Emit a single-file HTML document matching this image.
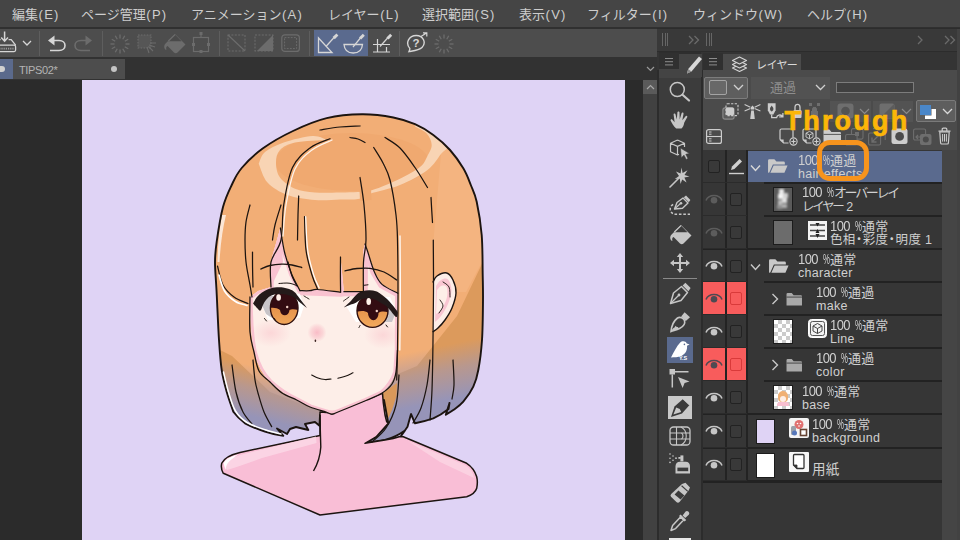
<!DOCTYPE html>
<html lang="ja">
<head>
<meta charset="utf-8">
<title>CLIP STUDIO PAINT - TIPS02</title>
<style>
html,body{margin:0;padding:0;}
body{width:960px;height:540px;overflow:hidden;background:#2b2b2b;position:relative;
 font-family:"Liberation Sans","Noto Sans CJK JP",sans-serif;color:#d6d6d6;}
.abs{position:absolute;}
#menubar{left:0;top:0;width:960px;height:26.5px;background:#454545;border-bottom:2px solid #303030;}
#menubar span{position:absolute;top:5px;font-size:13px;line-height:20px;color:#cecece;white-space:nowrap;}
#menubar i{font-style:normal;letter-spacing:1.3px;margin-left:0.5px;}
#toolbar{left:0;top:28.5px;width:657px;height:28.5px;background:#4d4d4d;}
#tabrow{left:0;top:57px;width:657px;height:22.5px;background:#323232;}
#tabsel{left:0;top:58.5px;width:13px;height:20.5px;background:#5b6a8c;}
#tab{left:13px;top:58.5px;width:112px;height:20.5px;background:#4d4d4d;}
#tab span{position:absolute;left:6px;top:3px;font-size:11px;line-height:16px;color:#b4b4b4;letter-spacing:-0.35px;}
#workspace{left:0;top:80px;width:643px;height:460px;background:#2b2b2b;}
#canvas{left:82px;top:80px;width:543px;height:460px;background:#dfd3f5;}
#vscroll{left:643.3px;top:79.5px;width:13.7px;height:461px;background:#414141;}
#rightdock{left:657px;top:28px;width:303px;height:512px;background:#2c2c2c;}
#dockstrip2{left:657px;top:52px;width:303px;height:18px;background:#343434;}
#dockright{left:956.5px;top:28.5px;width:3.5px;height:512px;background:#424242;}
#dockhead{left:657px;top:28.7px;width:303px;height:22.3px;background:#393939;}
#toolpanel{left:659px;top:75px;width:42px;height:465px;background:#3c3c3c;}
#tooltab{left:659px;top:52px;width:42px;height:23px;background:#2e2e2e;}
#layerpanel{left:703px;top:70px;width:253.5px;height:470px;background:#4b4b4b;}
#layerlist{left:703px;top:150px;width:239px;height:390px;background:#363636;}
#layerscroll{left:942px;top:150px;width:14.5px;height:390px;background:#454545;}
.row{position:absolute;left:703px;width:239px;height:33px;}
.row .sep{position:absolute;left:0;bottom:0;height:1px;width:239px;background:#1f1f1f;}
.t2{font-size:12.5px !important;}
.t1,.t2{position:absolute;white-space:nowrap;font-size:13px;line-height:14px;color:#d0d0d0;letter-spacing:0.3px;}

.eye{position:absolute;left:3px;width:17px;height:10px;}
.chk{position:absolute;left:27px;width:11px;height:11px;border:1px solid #232323;border-radius:2px;background:#353535;box-sizing:content-box;}
.vl{position:absolute;top:150px;width:1px;height:331px;background:#222;}
.thumb{position:absolute;width:17px;height:22px;border:1px solid #1e1e1e;background:#fff;}
.lat{letter-spacing:0.2px;}
.red{position:absolute;background:#f85c5c;height:32px;top:0;}

.n{letter-spacing:-0.6px;display:inline-block;transform:scaleY(1.13);transform-origin:50% 78%;}
.pc{display:inline-block;width:6.5px;margin-left:5.5px;transform:scale(.6,1.13);transform-origin:0 78%;}
.k{letter-spacing:-2.3px;}
.dot{display:inline-block;width:7.2px;text-indent:-2.9px;}
</style>
</head>
<body>
<div id="menubar" class="abs">
 <span style="left:12px">編集<i>(E)</i></span>
 <span style="left:81px">ページ管理<i>(P)</i></span>
 <span style="left:191px">アニメーション<i>(A)</i></span>
 <span style="left:328px">レイヤー<i>(L)</i></span>
 <span style="left:422px">選択範囲<i>(S)</i></span>
 <span style="left:519px">表示<i>(V)</i></span>
 <span style="left:587px">フィルター<i>(I)</i></span>
 <span style="left:693px">ウィンドウ<i>(W)</i></span>
 <span style="left:807px">ヘルプ<i>(H)</i></span>
</div>
<div id="toolbar" class="abs"></div>
<div id="tabrow" class="abs"></div>
<div id="tabsel" class="abs"></div>
<div id="tab" class="abs"><span>TIPS02*</span></div>
<div id="workspace" class="abs"></div>
<div id="canvas" class="abs"></div>
<!-- ILLU -->
<svg class="abs" id="illu" style="left:82px;top:80px" width="543" height="460" viewBox="82 80 543 460">
<defs>
<linearGradient id="violet" gradientUnits="userSpaceOnUse" x1="364" y1="362" x2="375" y2="415"><stop offset="0" stop-color="#a096b0" stop-opacity="0"/><stop offset="0.45" stop-color="#a096b0" stop-opacity="0.6"/><stop offset="1" stop-color="#9694b8" stop-opacity="1"/></linearGradient>
<linearGradient id="violetL" gradientUnits="userSpaceOnUse" x1="262" y1="368" x2="250" y2="416"><stop offset="0" stop-color="#a096b0" stop-opacity="0"/><stop offset="0.45" stop-color="#a096b0" stop-opacity="0.6"/><stop offset="1" stop-color="#9694b8" stop-opacity="1"/></linearGradient>
<linearGradient id="irisg" gradientUnits="userSpaceOnUse" x1="0" y1="292" x2="0" y2="326">
 <stop offset="0" stop-color="#d88440"/><stop offset="0.5" stop-color="#e6944c"/><stop offset="1" stop-color="#f2a85c"/>
</linearGradient>
<radialGradient id="blush" cx="0.5" cy="0.5" r="0.5"><stop offset="0" stop-color="#f7a0b4" stop-opacity="0.65"/><stop offset="0.6" stop-color="#f7a8b8" stop-opacity="0.35"/><stop offset="1" stop-color="#f7a8b8" stop-opacity="0"/></radialGradient>
<radialGradient id="cheek" cx="0.5" cy="0.5" r="0.5"><stop offset="0" stop-color="#f9b4c0" stop-opacity="0.4"/><stop offset="1" stop-color="#f9b4c0" stop-opacity="0"/></radialGradient>
<clipPath id="faceclip"><path d="M250 297 L258 291 L271 287 L271 261 L280.4 227.8 L284.5 252 L291.6 274 L300 290.7 L310 290.7 L317.5 289.5 L340.6 292.2 L340.5 257 L343.9 291.7 L363.3 291.7 L363.5 250 L365 244 L367.8 252 L374.4 272 L382 284.4 L397.8 293.3 L397.5 350 L396 372 Q392 384 381.7 393.3 L366 400.5 L338 412 Q332 414.6 326 412 L310 407 L296.7 400 Q282 393 270 382 Q259 371 254 352 Q250 332 250 297 Z"/></clipPath>
<clipPath id="hairclip"><path d="M245 423.3 Q238 418 233.3 411.7 C232.2 408.4 228.6 398.6 226.7 391.7 C224.8 384.8 223.0 378.6 221.7 370.0 C220.4 361.4 219.9 353.3 219.0 340.0 C218.1 326.7 217.2 303.0 216.5 290.0 C215.8 277.0 215.0 270.1 215.0 262.0 C215.0 253.9 215.4 250.9 216.7 241.7 C218.0 232.5 220.5 216.4 223.0 207.0 C225.5 197.6 228.6 191.5 231.7 185.0 C234.8 178.5 236.5 174.1 241.7 168.0 C246.9 161.9 254.4 154.5 263.0 148.3 C271.6 142.1 282.4 136.0 293.0 131.0 C303.6 126.0 315.2 121.0 326.7 118.2 C338.2 115.4 350.9 114.4 362.0 114.3 C373.1 114.2 384.5 115.8 393.3 117.5 C402.1 119.2 408.3 121.3 415.0 124.2 C421.7 127.1 427.5 130.7 433.3 135.0 C439.1 139.3 445.0 144.4 450.0 150.0 C455.0 155.6 459.8 162.5 463.3 168.3 C466.8 174.1 468.6 179.4 470.8 185.0 C473.0 190.6 474.9 193.4 476.7 201.7 C478.5 210.0 480.7 222.8 481.7 235.0 C482.7 247.2 482.5 264.2 482.7 275.0 C482.9 285.8 483.1 289.2 483.0 300.0 C482.9 310.8 482.8 328.3 482.0 340.0 C481.2 351.7 479.8 362.2 478.3 370.0 C476.9 377.8 475.8 381.4 473.3 386.7 C470.8 392.0 466.6 397.8 463.3 401.7 C460.0 405.6 456.2 407.8 453.3 410.0 C450.4 412.2 447.1 413.9 445.8 414.7 L449.5 403 L448.5 409 Q441 415 433.3 418.3 Q424 421.5 415 423.3 L411 414 L407.5 426.7 L400 437.5 L405 430.5 Q396 437 385 440 L365 443.3 L376 437 L388.3 423.3 L384 400 L330 405 L320 415 L319.5 425.8 L315 422 L305 424 L308.3 430 L296 427 L290 429 L287 434 L277 428.5 L283.3 435.8 Q273 434.5 265 431.7 Q254 428 245 423.3 Z"/></clipPath>
</defs>
<path d="M245 423.3 Q238 418 233.3 411.7 C232.2 408.4 228.6 398.6 226.7 391.7 C224.8 384.8 223.0 378.6 221.7 370.0 C220.4 361.4 219.9 353.3 219.0 340.0 C218.1 326.7 217.2 303.0 216.5 290.0 C215.8 277.0 215.0 270.1 215.0 262.0 C215.0 253.9 215.4 250.9 216.7 241.7 C218.0 232.5 220.5 216.4 223.0 207.0 C225.5 197.6 228.6 191.5 231.7 185.0 C234.8 178.5 236.5 174.1 241.7 168.0 C246.9 161.9 254.4 154.5 263.0 148.3 C271.6 142.1 282.4 136.0 293.0 131.0 C303.6 126.0 315.2 121.0 326.7 118.2 C338.2 115.4 350.9 114.4 362.0 114.3 C373.1 114.2 384.5 115.8 393.3 117.5 C402.1 119.2 408.3 121.3 415.0 124.2 C421.7 127.1 427.5 130.7 433.3 135.0 C439.1 139.3 445.0 144.4 450.0 150.0 C455.0 155.6 459.8 162.5 463.3 168.3 C466.8 174.1 468.6 179.4 470.8 185.0 C473.0 190.6 474.9 193.4 476.7 201.7 C478.5 210.0 480.7 222.8 481.7 235.0 C482.7 247.2 482.5 264.2 482.7 275.0 C482.9 285.8 483.1 289.2 483.0 300.0 C482.9 310.8 482.8 328.3 482.0 340.0 C481.2 351.7 479.8 362.2 478.3 370.0 C476.9 377.8 475.8 381.4 473.3 386.7 C470.8 392.0 466.6 397.8 463.3 401.7 C460.0 405.6 456.2 407.8 453.3 410.0 C450.4 412.2 447.1 413.9 445.8 414.7 L449.5 403 L448.5 409 Q441 415 433.3 418.3 Q424 421.5 415 423.3 L411 414 L407.5 426.7 L400 437.5 L405 430.5 Q396 437 385 440 L365 443.3 L376 437 L388.3 423.3 L384 400 L330 405 L320 415 L319.5 425.8 L315 422 L305 424 L308.3 430 L296 427 L290 429 L287 434 L277 428.5 L283.3 435.8 Q273 434.5 265 431.7 Q254 428 245 423.3 Z" fill="#f2ae76"/>
<g clip-path="url(#hairclip)">
<path d="M441 154 L447 146 L490 180 L490 247 L466 292 L434 292 L433.5 240 Z" fill="#f4b480"/>
<path d="M490 247 L457 316 L417 366 L398 374 L398 460 L500 460 L500 262 Z" fill="#dc9a5c"/>
<path d="M210 345 L232 356 L251 374 L270 392 L330 415 L330 460 L210 460 Z" fill="#dc9a5c"/>
<ellipse cx="352" cy="162" rx="77" ry="29" fill="#f0a970"/>
<path d="M258.7 163.7 C260.2 166.8 262.7 177.3 267.5 182.5 C272.3 187.7 279.6 192.1 287.5 195.0 C295.4 197.9 306.2 199.2 315.0 200.0 C323.8 200.8 332.8 199.7 340.0 199.5 C347.2 199.3 353.0 200.0 358.0 199.0 C363.0 198.0 363.0 196.0 370.0 193.7 C377.0 191.4 390.4 188.9 400.0 185.0 C409.6 181.1 420.7 175.2 427.5 170.0 C434.3 164.8 437.8 158.0 441.0 154.0 C444.2 150.0 448.3 149.3 447.0 146.0 C445.7 142.7 438.6 137.8 433.3 134.0 C428.0 130.2 418.1 125.2 415.0 123.5 L415 126.5 C416.9 127.7 423.9 130.4 426.7 133.5 C429.5 136.6 431.6 141.1 431.7 145.0 C431.8 148.9 428.9 153.3 427.0 157.0 C425.1 160.7 424.5 163.4 420.0 167.0 C415.5 170.6 407.9 174.9 400.0 178.7 C392.1 182.5 379.5 187.8 372.5 190.0 C365.5 192.2 363.4 191.6 358.0 192.0 C352.6 192.4 347.2 192.4 340.0 192.5 C332.8 192.6 322.5 193.1 315.0 192.5 C307.5 191.9 300.8 191.2 295.0 188.7 C289.2 186.2 283.2 181.9 280.0 177.5 C276.8 173.1 276.0 167.1 276.0 162.5 C276.0 157.9 276.8 153.3 280.0 150.0 C283.2 146.7 287.2 144.2 295.0 142.5 C302.8 140.8 321.7 140.4 327.0 140.0 C324.6 139.3 319.7 135.6 312.5 136.0 C305.3 136.4 291.6 139.8 283.7 142.5 C275.8 145.2 269.2 148.5 265.0 152.0 C260.8 155.5 259.8 161.8 258.7 163.7 Z" fill="#f8d4b4"/>
<path d="M359.5 190 L371 188 L371.5 200 L360 201 Z" fill="#f0a970"/>
<path d="M222 215 Q218 235 217.5 262 L219.5 262 Q221 235 226 215 Z" fill="#fbe6d6"/>
<rect x="200" y="345" width="125" height="110" fill="url(#violetL)"/>
<rect x="325" y="335" width="175" height="120" fill="url(#violet)"/>
<path d="M382.5 393.3 L397 383 L396.5 396 L392 410 L386.7 421.7 L383.3 403.3 Z" fill="#d9985a"/>
</g>
<path d="M245 423.3 Q238 418 233.3 411.7 C232.2 408.4 228.6 398.6 226.7 391.7 C224.8 384.8 223.0 378.6 221.7 370.0 C220.4 361.4 219.9 353.3 219.0 340.0 C218.1 326.7 217.2 303.0 216.5 290.0 C215.8 277.0 215.0 270.1 215.0 262.0 C215.0 253.9 215.4 250.9 216.7 241.7 C218.0 232.5 220.5 216.4 223.0 207.0 C225.5 197.6 228.6 191.5 231.7 185.0 C234.8 178.5 236.5 174.1 241.7 168.0 C246.9 161.9 254.4 154.5 263.0 148.3 C271.6 142.1 282.4 136.0 293.0 131.0 C303.6 126.0 315.2 121.0 326.7 118.2 C338.2 115.4 350.9 114.4 362.0 114.3 C373.1 114.2 384.5 115.8 393.3 117.5 C402.1 119.2 408.3 121.3 415.0 124.2 C421.7 127.1 427.5 130.7 433.3 135.0 C439.1 139.3 445.0 144.4 450.0 150.0 C455.0 155.6 459.8 162.5 463.3 168.3 C466.8 174.1 468.6 179.4 470.8 185.0 C473.0 190.6 474.9 193.4 476.7 201.7 C478.5 210.0 480.7 222.8 481.7 235.0 C482.7 247.2 482.5 264.2 482.7 275.0 C482.9 285.8 483.1 289.2 483.0 300.0 C482.9 310.8 482.8 328.3 482.0 340.0 C481.2 351.7 479.8 362.2 478.3 370.0 C476.9 377.8 475.8 381.4 473.3 386.7 C470.8 392.0 466.6 397.8 463.3 401.7 C460.0 405.6 456.2 407.8 453.3 410.0 C450.4 412.2 447.1 413.9 445.8 414.7 L449.5 403 L448.5 409 Q441 415 433.3 418.3 Q424 421.5 415 423.3 L411 414 L407.5 426.7 L400 437.5 L405 430.5 Q396 437 385 440 L365 443.3 L376 437 L388.3 423.3 L384 400 L330 405 L320 415 L319.5 425.8 L315 422 L305 424 L308.3 430 L296 427 L290 429 L287 434 L277 428.5 L283.3 435.8 Q273 434.5 265 431.7 Q254 428 245 423.3 Z" fill="none" stroke="#1c1410" stroke-width="1.9" stroke-linejoin="round"/>
<path d="M320 412 L320 435.5 L240 452.5 Q225 456 221.7 463.3 Q220.5 469 223.3 473.3 L320 515 L466.7 496.7 Q475 494 476.7 488.3 Q478 482 476.7 476.7 Q474 468 466.7 463.3 L403.3 436.7 L400 436.5 Q394 438.5 385 440 L365 443.3 L376 437 L388.3 423.3 L386.7 421.7 L385 415 L383.3 403 L382.5 393.3 L333 413 Z" fill="#f9bed6" stroke="#1c1410" stroke-width="1.5" stroke-linejoin="round"/>
<path d="M320 415 Q320.3 432 320.8 447 Q320 460 313.5 471" fill="none" stroke="#1c1410" stroke-width="1.4"/>
<path d="M250 297 L258 291 L271 287 L271 261 L280.4 227.8 L284.5 252 L291.6 274 L300 290.7 L310 290.7 L317.5 289.5 L340.6 292.2 L340.5 257 L343.9 291.7 L363.3 291.7 L363.5 250 L365 244 L367.8 252 L374.4 272 L382 284.4 L397.8 293.3 L397.5 350 L396 372 Q392 384 381.7 393.3 L366 400.5 L338 412 Q332 414.6 326 412 L310 407 L296.7 400 Q282 393 270 382 Q259 371 254 352 Q250 332 250 297 Z" fill="#fdeee8"/>
<g clip-path="url(#faceclip)">
<path d="M250 297 L258 291 L271 287 L271 261 L280.4 227.8 L284.5 252 L291.6 274 L300 290.7 L310 290.7 L317.5 289.5 L340.6 292.2 L340.5 257 L343.9 291.7 L363.3 291.7 L363.5 250 L365 244 L367.8 252 L374.4 272 L382 284.4 L397.8 293.3 L397.5 350 L396 372 Q392 384 381.7 393.3 L366 400.5 L338 412 Q332 414.6 326 412 L310 407 L296.7 400 Q282 393 270 382 Q259 371 254 352 Q250 332 250 297 Z" fill="none" stroke="#f9c2d0" stroke-width="5.5" stroke-linejoin="round"/>
<path d="M271 287 L271 258 L280.4 227.8 L283 262 Z" fill="#f9c2d0"/>
<path d="M300 290.7 L340.6 292.2 L343.9 291.7 L363.3 291.7 L363.5 250 L365 244" fill="none" stroke="#f9c2d0" stroke-width="9"/>
<path d="M365 244 L367.8 252 L374.4 272 L382 284.4 L397.8 293.3" fill="none" stroke="#f9c2d0" stroke-width="8"/>
<ellipse cx="271" cy="333" rx="20" ry="14" fill="url(#cheek)"/>
<ellipse cx="383" cy="335" rx="19" ry="14" fill="url(#cheek)"/>
<circle cx="317" cy="332.5" r="9.5" fill="url(#blush)"/>
<path d="M261 303 L270 295 L300 294 L304 306 L300 318 L268 320 Z" fill="#ffffff"/>
<path d="M261 303 L270 295 L273 296 L272 318 L266 314 Z" fill="#c8c4c8"/>
<path d="M346 306 L356 296 L390 297 L396 310 L392 320 L356 322 Z" fill="#ffffff"/>
<path d="M384 299 L392 305 L396 312 L392 322 L385 322 Z" fill="#c8c4c8"/>
<clipPath id="irL"><ellipse cx="284.2" cy="308" rx="13.8" ry="16.5"/></clipPath><clipPath id="irR"><ellipse cx="372.5" cy="310.7" rx="15.5" ry="16.7"/></clipPath>
<ellipse cx="284.2" cy="308" rx="13.8" ry="16.5" fill="url(#irisg)"/>
<ellipse cx="372.5" cy="310.7" rx="15.5" ry="16.7" fill="url(#irisg)"/>
<g clip-path="url(#irL)"><path d="M268 285 L300 285 L300 310.6 C296 309 291.5 308.6 289.5 310 C289 317 280.5 317 280 310 C277 307.5 272 307 268 308.5 Z" fill="#330c12"/></g>
<g clip-path="url(#irR)"><path d="M355 285 L390 285 L390 313 C386 311.2 381 311 378.5 313 C378.5 322.5 368.5 322.5 368 313 C365 310.5 360 310.5 355 312.6 Z" fill="#330c12"/></g>
<ellipse cx="284.2" cy="308" rx="13.8" ry="16.5" fill="none" stroke="#2e1010" stroke-width="1.4"/>
<ellipse cx="372.5" cy="310.7" rx="15.5" ry="16.7" fill="none" stroke="#2e1010" stroke-width="1.4"/>
<path d="M253.0 303.5 C253.7 302.4 255.5 298.8 257.0 297.0 C258.5 295.2 260.2 293.8 262.0 292.5 C263.8 291.2 265.9 290.1 268.0 289.3 C270.1 288.5 272.0 287.9 274.5 287.6 C277.0 287.3 280.3 287.1 283.0 287.5 C285.7 287.9 288.8 288.9 290.8 289.7 C292.8 290.5 293.8 291.4 295.0 292.5 C296.2 293.6 296.8 294.8 298.0 296.3 C299.2 297.8 300.5 299.6 302.0 301.5 C303.5 303.4 306.2 306.9 307.0 308.0 C305.8 307.1 301.8 304.0 300.0 302.5 C298.2 301.0 297.5 299.9 296.0 298.8 C294.5 297.7 293.0 296.8 291.0 296.0 C289.0 295.2 286.5 294.6 284.0 294.3 C281.5 294.0 278.3 294.0 276.0 294.3 C273.7 294.6 271.7 295.4 270.0 296.3 C268.3 297.2 267.2 298.6 266.0 300.0 C264.8 301.4 263.9 303.2 263.0 305.0 C262.1 306.8 261.5 310.1 260.5 310.6 C259.5 311.1 258.2 309.2 257.0 308.0 C255.8 306.8 253.7 304.2 253.0 303.5 Z" fill="#241a1a"/>
<path d="M343.7 307.5 C345.0 306.3 349.0 302.7 351.3 300.4 C353.6 298.1 355.4 295.4 357.4 293.8 C359.3 292.2 360.9 291.6 363.0 291.0 C365.1 290.4 367.5 290.1 369.7 290.2 C371.9 290.2 374.1 290.6 376.0 291.3 C377.9 292.0 379.2 293.0 381.0 294.3 C382.8 295.6 385.2 297.3 387.0 299.0 C388.8 300.7 390.1 302.2 392.0 304.5 C393.9 306.8 397.2 311.2 398.3 312.6 C397.9 313.3 397.6 317.4 396.2 317.0 C394.8 316.6 391.7 311.8 390.0 310.0 C388.3 308.2 387.3 307.1 386.0 306.0 C384.7 304.9 383.7 304.5 382.0 303.5 C380.3 302.5 377.9 300.8 376.0 300.0 C374.1 299.2 372.5 298.8 370.7 298.6 C368.9 298.4 366.7 298.4 365.0 298.6 C363.3 298.8 362.1 299.1 360.5 299.8 C358.9 300.5 357.1 302.2 355.4 303.0 C353.7 303.8 352.2 304.1 350.3 304.8 C348.4 305.6 344.8 307.1 343.7 307.5 Z" fill="#241a1a"/>
<ellipse cx="278.6" cy="297.5" rx="2.3" ry="3.2" fill="#fff2ea"/><circle cx="287.2" cy="307" r="1.2" fill="#f4d4c8"/>
<ellipse cx="368.7" cy="301.4" rx="2.3" ry="3.5" fill="#fff2ea"/><circle cx="376.8" cy="311" r="1.2" fill="#f4d4c8"/>
<path d="M264.5 318.5 C264.8 318.9 266.2 320.6 266.5 321.0" fill="none" stroke="#1c1410" stroke-width="1" stroke-linecap="round" /><path d="M274.5 318.5 C274.7 318.8 275.3 320.2 275.5 320.5" fill="none" stroke="#1c1410" stroke-width="1" stroke-linecap="round" />
<path d="M386.0 325.0 C386.2 325.3 387.2 326.7 387.5 327.0" fill="none" stroke="#1c1410" stroke-width="1" stroke-linecap="round" /><path d="M360.0 325.5 C359.8 325.8 359.2 327.2 359.0 327.5" fill="none" stroke="#1c1410" stroke-width="1" stroke-linecap="round" />
<path d="M279.0 283.5 C280.8 283.5 286.3 282.6 290.0 283.3 C293.7 284.0 299.2 286.8 301.0 287.5" fill="none" stroke="#1c1410" stroke-width="1.0" stroke-linecap="round" />
<path d="M347.0 291.0 C348.7 290.2 353.5 287.5 357.0 286.5 C360.5 285.5 366.2 285.1 368.0 284.8" fill="none" stroke="#1c1410" stroke-width="1.0" stroke-linecap="round" />
<path d="M304.0 296.0 C304.8 296.5 308.2 298.5 309.0 299.0" fill="none" stroke="#1c1410" stroke-width="0.9" stroke-linecap="round" /><path d="M343.5 301.0 C344.4 300.3 348.1 297.7 349.0 297.0" fill="none" stroke="#1c1410" stroke-width="0.9" stroke-linecap="round" />
<ellipse cx="315.4" cy="340.8" rx="0.8" ry="1.3" fill="#3a2420"/>
<path d="M311.7 375.0 C312.8 375.5 315.8 377.2 318.0 378.0 C320.2 378.8 322.8 379.3 325.0 379.5 C327.2 379.7 330.0 379.1 331.0 379.0" fill="none" stroke="#1c1410" stroke-width="1.2" stroke-linecap="round" />
<path d="M338.0 378.3 C339.3 377.9 343.5 376.9 346.0 376.0 C348.5 375.1 351.8 373.3 353.0 372.8" fill="none" stroke="#1c1410" stroke-width="1.2" stroke-linecap="round" />
</g>
<path d="M250.0 297.0 C250.0 302.8 249.3 322.8 250.0 332.0 C250.7 341.2 252.5 345.5 254.0 352.0 C255.5 358.5 256.3 366.0 259.0 371.0 C261.7 376.0 266.2 378.3 270.0 382.0 C273.8 385.7 277.6 390.0 282.0 393.0 C286.4 396.0 292.0 397.7 296.7 400.0 C301.4 402.3 305.1 405.0 310.0 407.0 C314.9 409.0 322.3 410.8 326.0 412.0 C329.7 413.2 330.0 414.3 332.0 414.3 C334.0 414.3 332.3 414.3 338.0 412.0 C343.7 409.7 358.7 403.6 366.0 400.5 C373.3 397.4 377.4 396.1 381.7 393.3 C386.0 390.6 389.6 387.6 392.0 384.0 C394.4 380.4 395.1 377.7 396.0 372.0 C396.9 366.3 397.2 353.7 397.5 350.0" fill="none" stroke="#1c1410" stroke-width="1.3" stroke-linecap="round" />
<path d="M433.0 282.0 C433.7 281.0 434.7 277.5 437.0 276.0 C439.3 274.5 444.0 272.3 446.7 273.0 C449.4 273.7 451.4 276.7 453.0 280.0 C454.6 283.3 456.2 288.3 456.0 293.0 C455.8 297.7 453.8 303.5 452.0 308.0 C450.2 312.5 447.3 316.7 445.0 320.0 C442.7 323.3 440.0 326.1 438.0 328.0 C436.0 329.9 433.8 331.1 433.0 331.7 L433 282 Z" fill="#fdeee8"/>
<path d="M436.0 286.0 C436.8 285.0 439.0 281.1 441.0 280.0 C443.0 278.9 446.2 277.8 448.0 279.5 C449.8 281.2 451.5 285.9 451.5 290.0 C451.5 294.1 449.8 299.7 448.0 304.0 C446.2 308.3 443.2 313.0 441.0 316.0 C438.8 319.0 436.0 321.0 435.0 322.0 Z" fill="#f9c6d2"/>
<path d="M437.0 290.0 C437.7 289.3 439.4 286.5 441.0 286.0 C442.6 285.5 445.5 285.2 446.5 287.0 C447.5 288.8 447.8 293.3 447.0 297.0 C446.2 300.7 443.8 306.2 442.0 309.0 C440.2 311.8 437.0 313.2 436.0 314.0 Z" fill="#fdeee8"/>
<path d="M433.0 282.0 C433.7 281.0 434.7 277.5 437.0 276.0 C439.3 274.5 444.0 272.3 446.7 273.0 C449.4 273.7 451.4 276.7 453.0 280.0 C454.6 283.3 456.2 288.3 456.0 293.0 C455.8 297.7 453.8 303.5 452.0 308.0 C450.2 312.5 447.3 316.7 445.0 320.0 C442.7 323.3 440.0 326.1 438.0 328.0 C436.0 329.9 433.8 331.1 433.0 331.7" fill="none" stroke="#1c1410" stroke-width="1.4" stroke-linecap="round" />
<path d="M443.0 282.0 C444.0 282.8 447.8 284.5 449.0 287.0 C450.2 289.5 449.8 295.3 450.0 297.0" fill="none" stroke="#1c1410" stroke-width="0.9" stroke-linecap="round" />
<path d="M440.0 300.0 C440.5 301.0 443.2 303.8 443.0 306.0 C442.8 308.2 439.7 311.8 439.0 313.0" fill="none" stroke="#1c1410" stroke-width="0.9" stroke-linecap="round" />
<path d="M320.0 130.0 C323.3 129.5 333.3 127.7 340.0 127.0 C346.7 126.3 356.7 126.2 360.0 126.0" fill="none" stroke="#1c1410" stroke-width="1.25" stroke-linecap="round" />
<path d="M350.0 137.5 C351.3 137.8 355.5 138.2 358.0 139.0 C360.5 139.8 363.8 141.9 365.0 142.5" fill="none" stroke="#1c1410" stroke-width="1.25" stroke-linecap="round" />
<path d="M330.0 138.7 C326.7 140.2 316.2 143.2 310.0 148.0 C303.8 152.8 296.9 158.0 292.5 167.5 C288.1 177.0 285.6 192.9 283.7 205.0 C281.8 217.1 283.1 230.5 281.0 240.0 C278.9 249.5 272.7 254.2 271.0 262.0 C269.3 269.8 271.0 282.8 271.0 287.0" fill="none" stroke="#1c1410" stroke-width="1.25" stroke-linecap="round" />
<path d="M385.0 137.5 C387.5 139.2 395.0 143.0 400.0 148.0 C405.0 153.0 410.4 160.9 415.0 167.5 C419.6 174.1 425.4 184.2 427.5 187.5" fill="none" stroke="#1c1410" stroke-width="1.25" stroke-linecap="round" />
<path d="M373.7 147.5 C375.2 150.1 380.3 157.6 383.0 163.0 C385.7 168.4 387.8 171.3 390.0 180.0 C392.2 188.7 394.8 205.0 396.0 215.0 C397.2 225.0 397.2 227.0 397.5 240.0 C397.8 253.0 398.0 274.7 398.0 293.0 C398.0 311.3 397.7 335.5 397.5 350.0 C397.3 364.5 396.8 375.0 396.7 380.0" fill="none" stroke="#1c1410" stroke-width="1.25" stroke-linecap="round" />
<path d="M360.0 177.5 C360.7 182.1 363.0 194.6 364.0 205.0 C365.0 215.4 366.1 230.5 366.0 240.0 C365.9 249.5 363.9 253.5 363.5 262.0 C363.1 270.5 363.4 286.2 363.4 291.0" fill="none" stroke="#1c1410" stroke-width="1.25" stroke-linecap="round" />
<path d="M431.0 197.5 C431.2 201.7 432.2 218.3 432.5 222.5" fill="none" stroke="#1c1410" stroke-width="1.25" stroke-linecap="round" />
<path d="M250.0 205.0 C249.3 207.8 246.8 216.2 246.0 222.0 C245.2 227.8 245.0 233.3 245.0 240.0 C245.0 246.7 245.2 254.5 246.0 262.0 C246.8 269.5 249.0 279.2 250.0 285.0 C251.0 290.8 251.7 295.0 252.0 297.0" fill="none" stroke="#1c1410" stroke-width="1.25" stroke-linecap="round" />
<path d="M281.0 205.0 C280.0 208.3 276.4 219.2 275.0 225.0 C273.6 230.8 272.9 237.5 272.5 240.0" fill="none" stroke="#1c1410" stroke-width="1.25" stroke-linecap="round" />
<path d="M298.7 196.0 C298.6 199.2 298.2 207.7 298.0 215.0 C297.8 222.3 297.6 235.8 297.5 240.0" fill="none" stroke="#1c1410" stroke-width="1.25" stroke-linecap="round" />
<path d="M433.3 240.0 C433.3 248.3 433.6 273.3 433.5 290.0 C433.4 306.7 433.2 323.3 433.0 340.0 C432.8 356.7 432.5 376.7 432.0 390.0 C431.5 403.3 430.3 415.0 430.0 420.0" fill="none" stroke="#1c1410" stroke-width="1.25" stroke-linecap="round" />
<path d="M340.5 257.0 C340.5 260.0 340.4 269.2 340.4 275.0 C340.4 280.8 340.6 289.2 340.6 292.0" fill="none" stroke="#1c1410" stroke-width="1.25" stroke-linecap="round" />
<path d="M280.4 228.0 C281.1 232.0 282.6 244.3 284.5 252.0 C286.4 259.7 289.0 267.6 291.6 274.0 C294.2 280.4 298.6 287.9 300.0 290.7" fill="none" stroke="#1c1410" stroke-width="1.25" stroke-linecap="round" />
<path d="M300.0 290.7 C301.7 290.7 307.1 290.9 310.0 290.7 C312.9 290.5 312.4 289.2 317.5 289.5 C322.6 289.8 336.8 291.8 340.6 292.2" fill="none" stroke="#1c1410" stroke-width="1.25" stroke-linecap="round" />
<path d="M343.9 291.7 C347.1 291.7 360.1 291.7 363.3 291.7" fill="none" stroke="#1c1410" stroke-width="1.25" stroke-linecap="round" />
<path d="M365.0 244.0 C365.5 245.3 366.2 247.3 367.8 252.0 C369.4 256.7 372.0 266.6 374.4 272.0 C376.8 277.4 378.1 280.8 382.0 284.4 C385.9 287.9 395.2 291.8 397.8 293.3" fill="none" stroke="#1c1410" stroke-width="1.25" stroke-linecap="round" />
<path d="M252.5 252.0 C252.5 255.0 252.5 264.2 252.6 270.0 C252.7 275.8 252.9 284.2 253.0 287.0" fill="none" stroke="#1c1410" stroke-width="1.25" stroke-linecap="round" />
<path d="M288.0 262.0 C288.7 264.3 290.5 272.0 292.0 276.0 C293.5 280.0 296.2 284.3 297.0 286.0" fill="none" stroke="#1c1410" stroke-width="1.25" stroke-linecap="round" />
<path d="M304.5 216.7 C304.8 222.2 304.8 240.3 306.0 250.0 C307.2 259.7 310.1 268.5 312.0 275.0 C313.9 281.5 316.6 286.7 317.5 289.0" fill="none" stroke="#1c1410" stroke-width="1.25" stroke-linecap="round" />
<path d="M253.0 360.0 C253.3 363.3 254.2 374.5 255.0 380.0 C255.8 385.5 256.5 387.7 258.0 393.0 C259.5 398.3 261.7 406.4 264.0 412.0 C266.3 417.6 270.4 424.2 271.7 426.7" fill="none" stroke="#1c1410" stroke-width="1.25" stroke-linecap="round" />
<path d="M232.0 365.0 C232.7 369.5 234.2 384.2 236.0 392.0 C237.8 399.8 240.3 406.7 243.0 412.0 C245.7 417.3 250.5 422.0 252.0 424.0" fill="none" stroke="#1c1410" stroke-width="1.25" stroke-linecap="round" />
<path d="M430.0 360.0 C429.5 364.2 428.5 377.0 427.0 385.0 C425.5 393.0 423.3 401.7 421.0 408.0 C418.7 414.3 414.3 420.5 413.0 423.0" fill="none" stroke="#1c1410" stroke-width="1.25" stroke-linecap="round" />
<path d="M399.0 375.0 C398.5 380.0 398.2 396.2 396.0 405.0 C393.8 413.8 390.0 421.8 386.0 428.0 C382.0 434.2 374.3 439.7 372.0 442.0" fill="none" stroke="#1c1410" stroke-width="1.25" stroke-linecap="round" />
<path d="M453.0 360.0 C453.2 364.2 454.2 378.5 454.0 385.0 C453.8 391.5 452.3 396.7 452.0 399.0" fill="none" stroke="#1c1410" stroke-width="1.25" stroke-linecap="round" />
<path d="M217.5 266.0 C218.4 269.2 220.2 279.8 223.0 285.0 C225.8 290.2 229.8 293.9 234.0 297.0 C238.2 300.1 245.7 302.4 248.0 303.5" fill="none" stroke="#1c1410" stroke-width="1.2" stroke-linecap="round" />
<path d="M223.5 372.0 C224.3 375.3 226.5 385.5 228.5 392.0 C230.5 398.5 232.4 405.9 235.5 411.0 C238.6 416.1 241.9 419.3 247.0 422.5 C252.1 425.7 260.3 428.1 266.0 430.0 C271.7 431.9 278.5 433.3 281.0 434.0" fill="none" stroke="#ffffff" stroke-width="1.5" stroke-linecap="round" />
<path d="M260.8 269.0 C262.3 268.4 266.5 266.3 270.0 265.5 C273.5 264.7 278.0 264.3 281.7 264.2 C285.4 264.1 288.7 264.4 292.0 265.0 C295.3 265.6 300.1 267.1 301.7 267.5" fill="none" stroke="#1c1410" stroke-width="1.3" stroke-linecap="round" />
<path d="M345.0 270.8 C347.0 270.4 352.8 268.9 357.0 268.5 C361.2 268.1 365.5 267.7 370.0 268.3 C374.5 268.9 379.6 270.1 384.0 272.0 C388.4 273.9 394.6 278.7 396.7 280.0" fill="none" stroke="#1c1410" stroke-width="1.3" stroke-linecap="round" />
<path d="M304.5 216.7 C304.8 222.2 305.2 240.3 306.5 250.0 C307.8 259.7 310.6 268.7 312.5 275.0 C314.4 281.3 317.1 285.8 318.0 288.0" fill="none" stroke="#ffffff" stroke-width="1.2" stroke-linecap="round" transform="translate(1.2,0)"/>
<path d="M400.0 236.0 C400.1 245.5 400.3 274.0 400.3 293.0 C400.3 312.0 399.9 340.5 399.8 350.0" fill="none" stroke="#ffffff" stroke-width="1.3" stroke-linecap="round" />
<path d="M219.0 275.0 C219.9 277.7 221.8 286.6 224.5 291.0 C227.2 295.4 231.8 299.1 235.5 301.5 C239.2 303.9 245.1 304.8 247.0 305.5" fill="none" stroke="#ffffff" stroke-width="1.6" stroke-linecap="round" />
<path d="M332.0 140.0 C328.7 141.7 318.2 145.2 312.0 150.0 C305.8 154.8 299.3 159.8 295.0 169.0 C290.7 178.2 288.0 193.8 286.0 205.0 C284.0 216.2 283.5 230.8 283.0 236.0" fill="none" stroke="#fdf3ea" stroke-width="1.3" stroke-linecap="round" />
<path d="M240 455 L316 436.5 L316.5 443 L262 458 Q240 466 227 470 Q222 465 227 460 Z" fill="#fcd8e6" opacity="0.85"/>
<path d="M223.5 463 Q226 457.5 238 454.5 L232 459 Q226 463 225.5 470 Z" fill="#ffffff"/>
<path d="M408 441 L465 465 Q473 470 474 478 L440 462 Z" fill="#fcd8e6" opacity="0.7"/>
</svg>
<!-- /ILLU -->
<div id="vscroll" class="abs"></div>
<div id="rightdock" class="abs"></div>
<div id="dockhead" class="abs"></div>
<div id="dockstrip2" class="abs"></div>
<div id="dockright" class="abs"></div>
<div id="tooltab" class="abs"></div>
<div id="toolpanel" class="abs"></div>
<div id="layerpanel" class="abs"></div>
<div id="layerlist" class="abs"></div>
<div id="layerscroll" class="abs"></div>
<!-- TOOLBAR ICONS -->
<svg class="abs" style="left:-3px;top:31px" width="20" height="22" viewBox="0 0 20 22"><path d="M7.6 0.5 V10 M4.2 6.6 L7.6 10.2 L11 6.6" fill="none" stroke="#d6d6d6" stroke-width="1.5"/><path d="M3.6 8.6 H1.5 L-2 14.2 M11.6 8.6 H14.2 L18.6 14.2" fill="none" stroke="#d6d6d6" stroke-width="1.3"/><rect x="-2" y="14.2" width="20.6" height="6.4" rx="1.5" fill="none" stroke="#d6d6d6" stroke-width="1.3"/><path d="M0 17.6 H16.5" stroke="#9a9a9a" stroke-width="1.6" stroke-dasharray="1.2 1"/></svg>
<svg class="abs" style="left:22px;top:40px" width="10" height="7" viewBox="0 0 10 7"><path d="M1 1 L5 5 L9 1" fill="none" stroke="#d6d6d6" stroke-width="1.3"/></svg>
<div class="abs" style="left:39px;top:31px;width:1px;height:25px;background:#5e5e5e"></div>
<svg class="abs" style="left:47px;top:35px" width="20" height="17" viewBox="0 0 20 17"><path d="M7.5 0.5 L1 5.5 L7.5 10.5 Z" fill="#d6d6d6"/><path d="M6 5.5 H12 C20 5.5 20 15.5 12 15.5 H3" fill="none" stroke="#d6d6d6" stroke-width="1.6"/></svg>
<svg class="abs" style="left:73px;top:35px" width="20" height="17" viewBox="0 0 20 17"><path d="M12.5 0.5 L19 5.5 L12.5 10.5 Z" fill="#6c6c6c"/><path d="M14 5.5 H8 C0 5.5 0 15.5 8 15.5 H17" fill="none" stroke="#6c6c6c" stroke-width="1.6"/></svg>
<div class="abs" style="left:102px;top:31px;width:1px;height:25px;background:#5e5e5e"></div>
<svg class="abs" style="left:110px;top:34px" width="20" height="20" viewBox="0 0 20 20"><path d="M15.50 10.00 L19.50 10.00" stroke="#6c6c6c" stroke-width="1.3"/><path d="M14.76 12.75 L18.23 14.75" stroke="#6c6c6c" stroke-width="1.3"/><path d="M12.75 14.76 L14.75 18.23" stroke="#6c6c6c" stroke-width="1.3"/><path d="M10.00 15.50 L10.00 19.50" stroke="#6c6c6c" stroke-width="1.3"/><path d="M7.25 14.76 L5.25 18.23" stroke="#6c6c6c" stroke-width="1.3"/><path d="M5.24 12.75 L1.77 14.75" stroke="#6c6c6c" stroke-width="1.3"/><path d="M4.50 10.00 L0.50 10.00" stroke="#6c6c6c" stroke-width="1.3"/><path d="M5.24 7.25 L1.77 5.25" stroke="#6c6c6c" stroke-width="1.3"/><path d="M7.25 5.24 L5.25 1.77" stroke="#6c6c6c" stroke-width="1.3"/><path d="M10.00 4.50 L10.00 0.50" stroke="#6c6c6c" stroke-width="1.3"/><path d="M12.75 5.24 L14.75 1.77" stroke="#6c6c6c" stroke-width="1.3"/><path d="M14.76 7.25 L18.23 5.25" stroke="#6c6c6c" stroke-width="1.3"/></svg>
<svg class="abs" style="left:137px;top:34px" width="20" height="20" viewBox="0 0 20 20"><rect x="1" y="1" width="13" height="13" fill="#565656" stroke="#6c6c6c" stroke-width="1.1" stroke-dasharray="1.6 1.3"/><path d="M12 11 L18 13 M11.5 12.5 L16 17 M10 13 L12 19 M13 9 L19 9" stroke="#6c6c6c" stroke-width="1.1"/></svg>
<svg class="abs" style="left:163px;top:33px" width="23" height="21" viewBox="0 0 23 21"><path d="M12 1 L22.5 11.5 L14.5 19.5 Q12.8 21 11 19.5 L4.6 13 C3.2 13.2 3 15 3.4 17 C1 16.4 0.4 12.5 2.6 10.4 Z" fill="#6c6c6c"/><path d="M5 8.2 L12 1.6 L18.5 8.2 Z" fill="#4a4a4a"/><path d="M12 1.6 L5.4 8" stroke="#6c6c6c" stroke-width="1.3"/></svg>
<svg class="abs" style="left:191px;top:32px" width="20" height="22" viewBox="0 0 20 22"><rect x="2.5" y="5.5" width="15" height="14" fill="none" stroke="#6c6c6c" stroke-width="1.2"/><path d="M10 1 V5.5" stroke="#6c6c6c" stroke-width="1.2"/><g fill="#6c6c6c"><rect x="8.5" y="0" width="3" height="3"/><rect x="1" y="11" width="3" height="3"/><rect x="16" y="11" width="3" height="3"/><rect x="8.5" y="18" width="3" height="3"/></g></svg>
<div class="abs" style="left:219px;top:31px;width:1px;height:25px;background:#5e5e5e"></div>
<svg class="abs" style="left:227px;top:34px" width="20" height="19" viewBox="0 0 20 19"><rect x="1" y="1" width="17" height="16" fill="none" stroke="#6c6c6c" stroke-width="1.1" stroke-dasharray="2 1.4"/><path d="M1 1 L18 17" stroke="#6c6c6c" stroke-width="1.1"/></svg>
<svg class="abs" style="left:254px;top:34px" width="21" height="19" viewBox="0 0 21 19"><rect x="1" y="1" width="18" height="16" fill="none" stroke="#6c6c6c" stroke-width="1.1" stroke-dasharray="2 1.4"/><path d="M19 1 V17 H3 Z" fill="#6c6c6c"/></svg>
<svg class="abs" style="left:281px;top:34px" width="20" height="19" viewBox="0 0 20 19"><rect x="0.8" y="0.8" width="17.6" height="16.6" rx="3" fill="none" stroke="#6c6c6c" stroke-width="1.2"/><rect x="3.6" y="3.6" width="12" height="11" fill="none" stroke="#6c6c6c" stroke-width="1" stroke-dasharray="1.8 1.3"/></svg>
<div class="abs" style="left:309px;top:31px;width:1px;height:25px;background:#5e5e5e"></div>
<div class="abs" style="left:314px;top:29.5px;width:54px;height:26.5px;background:#5a6a8e"></div>
<svg class="abs" style="left:317px;top:33px" width="23" height="21" viewBox="0 0 23 21"><path d="M1.5 5 V19.5 H15 Z" fill="none" stroke="#d6d6d6" stroke-width="1.3"/><path d="M9 13.5 L17 4.5" stroke="#d6d6d6" stroke-width="1.2"/><path d="M15.6 4 L19.4 0.6 L21.4 2.6 L17.8 6.2 Z" fill="#d6d6d6"/></svg>
<svg class="abs" style="left:343px;top:33px" width="23" height="21" viewBox="0 0 23 21"><path d="M1 11.5 H19.5 C19 17.5 15.5 20 10.2 20 C5 20 1.5 17.5 1 11.5 Z" fill="none" stroke="#d6d6d6" stroke-width="1.3"/><path d="M10 14 L17.4 5" stroke="#d6d6d6" stroke-width="1.2"/><path d="M16 4.4 L19.8 0.8 L21.8 2.8 L18.2 6.6 Z" fill="#d6d6d6"/></svg>
<svg class="abs" style="left:372px;top:33px" width="22" height="21" viewBox="0 0 22 21"><path d="M1 11.5 H18 M1 19 H18 M5.5 6 V19 M14.5 14 V19" stroke="#d6d6d6" stroke-width="1.2" fill="none"/><path d="M8 13.5 L15.6 5" stroke="#d6d6d6" stroke-width="1.2"/><path d="M14.4 4.4 L18.2 0.8 L20.2 2.8 L16.6 6.6 Z" fill="#d6d6d6"/></svg>
<div class="abs" style="left:399px;top:31px;width:1px;height:25px;background:#5e5e5e"></div>
<svg class="abs" style="left:406px;top:32px" width="23" height="22" viewBox="0 0 23 22"><path d="M3 19.5 C3.5 18.5 4 17.5 3.8 16.4 C-1 11 3 3.5 10.2 3.5 C17.5 3.5 20.5 11 16 15.6 C13 18.6 8 18.8 3 19.5 Z" fill="none" stroke="#d6d6d6" stroke-width="1.4"/><path d="M15 4.6 L20.5 1 M17 0.8 H20.8 V4.6" fill="none" stroke="#d6d6d6" stroke-width="1.2"/><text x="6.6" y="15.4" font-family="Liberation Sans,sans-serif" font-size="11.5" font-weight="bold" fill="#d6d6d6">?</text></svg>
<svg class="abs" style="left:434px;top:34px" width="20" height="20" viewBox="0 0 20 20"><path d="M15.50 10.00 L19.50 10.00" stroke="#6c6c6c" stroke-width="1.3"/><path d="M14.76 12.75 L18.23 14.75" stroke="#6c6c6c" stroke-width="1.3"/><path d="M12.75 14.76 L14.75 18.23" stroke="#6c6c6c" stroke-width="1.3"/><path d="M10.00 15.50 L10.00 19.50" stroke="#6c6c6c" stroke-width="1.3"/><path d="M7.25 14.76 L5.25 18.23" stroke="#6c6c6c" stroke-width="1.3"/><path d="M5.24 12.75 L1.77 14.75" stroke="#6c6c6c" stroke-width="1.3"/><path d="M4.50 10.00 L0.50 10.00" stroke="#6c6c6c" stroke-width="1.3"/><path d="M5.24 7.25 L1.77 5.25" stroke="#6c6c6c" stroke-width="1.3"/><path d="M7.25 5.24 L5.25 1.77" stroke="#6c6c6c" stroke-width="1.3"/><path d="M10.00 4.50 L10.00 0.50" stroke="#6c6c6c" stroke-width="1.3"/><path d="M12.75 5.24 L14.75 1.77" stroke="#6c6c6c" stroke-width="1.3"/><path d="M14.76 7.25 L18.23 5.25" stroke="#6c6c6c" stroke-width="1.3"/></svg>
<!-- /TOOLBAR ICONS -->
<div class="abs" style="left:0px;top:66px;width:5px;height:6px;border-radius:0 3px 3px 0;background:#d0d0d0"></div>
<div class="abs" style="left:111px;top:66px;width:6px;height:6px;border-radius:3px;background:#c4c4c4"></div>
<!-- RIGHT DOCK HEADER -->
<div class="abs" style="left:662px;top:33px;width:1px;height:13px;background:#666"></div><div class="abs" style="left:664.5px;top:33px;width:1px;height:13px;background:#666"></div><div class="abs" style="left:667px;top:33px;width:1px;height:13px;background:#666"></div>
<div class="abs" style="left:706px;top:33px;width:1px;height:13px;background:#666"></div><div class="abs" style="left:708.5px;top:33px;width:1px;height:13px;background:#666"></div><div class="abs" style="left:711px;top:33px;width:1px;height:13px;background:#666"></div>
<svg class="abs" style="left:688px;top:35px" width="12" height="10" viewBox="0 0 12 10"><path d="M1 1 L5 5 L1 9 M6.5 1 L10.5 5 L6.5 9" fill="none" stroke="#6a6a6a" stroke-width="1.3"/></svg>
<svg class="abs" style="left:943.5px;top:35px" width="12" height="10" viewBox="0 0 12 10"><path d="M1 1 L5 5 L1 9 M6.5 1 L10.5 5 L6.5 9" fill="none" stroke="#6a6a6a" stroke-width="1.3"/></svg>
<svg class="abs" style="left:917px;top:35px" width="7" height="10" viewBox="0 0 7 10"><path d="M1 1 L5 5 L1 9" fill="none" stroke="#6a6a6a" stroke-width="1.3"/></svg>
<svg class="abs" style="left:646px;top:66px" width="9" height="6" viewBox="0 0 9 6"><path d="M1 1 L4.5 4.5 L8 1" fill="none" stroke="#9a9a9a" stroke-width="1.2"/></svg>
<div class="abs" style="left:643.3px;top:79.5px;width:13.7px;height:14px;background:#5a5a5a"></div>
<svg class="abs" style="left:646px;top:84px" width="9" height="6" viewBox="0 0 9 6"><path d="M1 5 L4.5 1.5 L8 5" fill="none" stroke="#a8a8a8" stroke-width="1.2"/></svg>
<div class="abs" style="left:659px;top:53px;width:20px;height:16px;background:#303030"></div><div class="abs" style="left:659px;top:69px;width:43px;height:8px;background:#444"></div>
<div class="abs" style="left:665px;top:57.5px;width:8px;height:1px;background:#8c8c8c;box-shadow:0 3.2px 0 #8c8c8c,0 6.4px 0 #8c8c8c"></div>
<div class="abs" style="left:679px;top:54px;width:23px;height:22px;background:#444"></div>
<svg class="abs" style="left:684px;top:55px" width="18" height="20" viewBox="0 0 18 20"><path d="M3 18.5 L4.2 14 L15 1.5 L18 4 L7.5 16.5 Z" fill="#d8d8d8"/><path d="M3 18.5 L4.2 14 L7.5 16.5 Z" fill="#8a8a8a"/></svg>
<div class="abs" style="left:659px;top:75px;width:42px;height:3px;background:#444"></div>
<div class="abs" style="left:703px;top:53px;width:20px;height:16.5px;background:#303030"></div><div class="abs" style="left:703px;top:69.5px;width:21px;height:6px;background:#4b4b4b"></div>
<div class="abs" style="left:709px;top:57.5px;width:8px;height:1px;background:#8c8c8c;box-shadow:0 3.2px 0 #8c8c8c,0 6.4px 0 #8c8c8c"></div>
<div class="abs" style="left:722.5px;top:54px;width:78.5px;height:22px;background:#4b4b4b"></div>
<svg class="abs" style="left:731px;top:55px" width="17" height="19" viewBox="0 0 17 19"><g fill="#4b4b4b" stroke="#d4d4d4" stroke-width="1.2" stroke-linejoin="round"><path d="M8.5 9.5 L15.5 13 L8.5 16.5 L1.5 13 Z"/><path d="M8.5 6 L15.5 9.5 L8.5 13 L1.5 9.5 Z"/><path d="M8.5 2 L15.5 5.5 L8.5 9 L1.5 5.5 Z"/></g></svg>
<div class="abs" style="left:756px;top:58px;font-size:11px;line-height:14px;color:#dadada;white-space:nowrap;letter-spacing:-0.6px">レイヤー</div>
<div class="abs" style="left:704px;top:76.5px;width:43.5px;height:22px;border:1px solid #7c7c7c;border-radius:2px;background:#5e5e5e;box-sizing:border-box"></div>
<div class="abs" style="left:709px;top:80.3px;width:18px;height:15px;border:1px solid #a4a4a4;border-radius:2px;background:#686868;box-sizing:border-box"></div>
<svg class="abs" style="left:733px;top:84px" width="11" height="7" viewBox="0 0 11 7"><path d="M1 1 L5.5 5.5 L10 1" fill="none" stroke="#d0d0d0" stroke-width="1.3"/></svg>
<div class="abs" style="left:751px;top:77px;width:79px;height:22px;background:#525252"></div>
<div class="abs" style="left:770px;top:80px;font-size:13px;line-height:16px;color:#8e8e8e;white-space:nowrap">通過</div>
<svg class="abs" style="left:815px;top:84px" width="11" height="7" viewBox="0 0 11 7"><path d="M1 1 L5.5 5.5 L10 1" fill="none" stroke="#d0d0d0" stroke-width="1.3"/></svg>
<div class="abs" style="left:836px;top:82px;width:78px;height:11px;border:1px solid #7c7c7c;background:#404040;box-sizing:border-box"></div>
<!-- /RIGHT DOCK HEADER -->
<!-- TOOL ICONS -->
<svg class="abs" style="left:668px;top:80px" width="24" height="24" viewBox="0 0 24 24"><circle cx="9.3" cy="9.5" r="7" fill="none" stroke="#c6c6c6" stroke-width="1.5"/><path d="M14.5 14.7 L21 20.5" stroke="#c6c6c6" stroke-width="2.2" stroke-linecap="round"/></svg>
<svg class="abs" style="left:670px;top:111px" width="20" height="18" viewBox="0 0 20 18"><path d="M6.2 17.5 C3.5 15.5 2.2 12.5 0.6 9.6 C0.2 8.6 1.6 7.8 2.4 8.8 L4.6 11.3 L3.6 3.6 C3.4 2.2 5.2 2 5.5 3.3 L6.8 8.6 L7.4 1.6 C7.5 0.2 9.4 0.2 9.5 1.6 L9.7 8.4 L11.6 2.3 C12 1 13.8 1.5 13.5 2.9 L12.3 9.3 L15.6 5.2 C16.5 4.2 17.9 5.2 17.2 6.3 L14.3 11.4 C13.8 14.5 12.8 16.3 11.5 17.5 Z" fill="#c6c6c6"/></svg>
<svg class="abs" style="left:669px;top:139px" width="22" height="22" viewBox="0 0 22 22"><path d="M8.5 1 L15.5 4.2 V8 M8.5 1 L1.5 4.2 V12.8 L8.5 16 L10 15.3 M1.5 4.2 L8.5 7.4 L15.5 4.2 M8.5 7.4 V16" fill="none" stroke="#c6c6c6" stroke-width="1.2" stroke-linejoin="round"/><path d="M11.5 9 L20.5 14.5 L16.8 15.3 L19 19.6 L17.2 20.5 L15 16.2 L12.3 18.8 Z" fill="#c6c6c6" stroke="#3c3c3c" stroke-width="0.6"/></svg>
<svg class="abs" style="left:669px;top:167px" width="21" height="21" viewBox="0 0 21 21"><path d="M1 20 L10.5 10.5" stroke="#c6c6c6" stroke-width="1.6" stroke-linecap="round"/><path d="M12.5 0.5 L13.6 6 L18.5 3.2 L15.5 8 L20.5 9.5 L15.4 10.6 L17.6 15.5 L13.2 12.4 L11.5 17 L10.8 11.6 L5.8 12 L10 9 L7 4.6 L11.6 6.6 Z" fill="#c6c6c6"/></svg>
<svg class="abs" style="left:668px;top:195px" width="24" height="22" viewBox="0 0 24 22"><path d="M6.5 14 L9 7.5 L15 3 L20 8 L14.5 13.2 Z" fill="none" stroke="#c6c6c6" stroke-width="1.4" stroke-linejoin="round"/><path d="M6.5 14 L12.5 8.5" stroke="#c6c6c6" stroke-width="1.1"/><circle cx="13" cy="8.2" r="1.3" fill="#c6c6c6"/><path d="M15.8 2.2 L18 0.6 L22.4 5 L20.8 7.2 Z" fill="#c6c6c6"/><path d="M5.2 9.5 C1.5 11 1 17 5 18.5 M6.5 19.2 H22" fill="none" stroke="#c6c6c6" stroke-width="1.4" stroke-dasharray="2.6 1.8"/></svg>
<svg class="abs" style="left:669px;top:224px" width="24" height="21" viewBox="0 0 24 21"><path d="M12 1 L22.5 11.5 L14.5 19.5 Q12.8 21 11 19.5 L4.6 13 C3.2 13.2 3 15 3.4 17 C1 16.4 0.4 12.5 2.6 10.4 Z" fill="#c6c6c6"/><path d="M5 8.2 L12 1.6 L18.5 8.2 Z" fill="#3c3c3c"/><path d="M12 1.6 L5.4 8" stroke="#c6c6c6" stroke-width="1.3"/></svg>
<svg class="abs" style="left:669px;top:252px" width="22" height="22" viewBox="0 0 22 22"><path d="M11 1 L14.2 5 H12 V10 H17 V7.8 L21 11 L17 14.2 V12 H12 V17 H14.2 L11 21 L7.8 17 H10 V12 H5 V14.2 L1 11 L5 7.8 V10 H10 V5 H7.8 Z" fill="#c6c6c6"/></svg>
<div class="abs" style="left:663px;top:278px;width:34px;height:1px;background:#8a8a8a"></div>
<svg class="abs" style="left:669px;top:282px" width="22" height="23" viewBox="0 0 22 23"><path d="M1.5 21.5 L4.5 11 L12.5 4.5 L18.5 10.5 L12 18.5 Z" fill="none" stroke="#c6c6c6" stroke-width="1.5" stroke-linejoin="round"/><path d="M1.5 21.5 L9.5 13.5" stroke="#c6c6c6" stroke-width="1.2"/><circle cx="10" cy="13" r="1.4" fill="#c6c6c6"/><path d="M13.6 3.4 L16.4 0.8 L21.6 6 L19.4 9.2 Z" fill="#c6c6c6"/></svg>
<svg class="abs" style="left:669px;top:311px" width="22" height="22" viewBox="0 0 22 22"><path d="M2 20.5 C2.5 15 4 10.5 8.5 7 C11 5.5 14.5 7 15.5 9.5 C16.5 13 13.5 16 10.5 17.5 C7.5 19 4.5 19.5 2 20.5 Z" fill="none" stroke="#c6c6c6" stroke-width="1.6"/><path d="M2 20.5 C4 16.5 5.5 17.5 6.5 14.8 C7.5 16.8 9 15 9.8 17.6 C7 19 4.5 19.6 2 20.5 Z" fill="#c6c6c6"/><path d="M12.2 5.6 L15.6 1.2 L21 6.2 L16.8 10 Z" fill="#c6c6c6"/></svg>
<div class="abs" style="left:667px;top:337px;width:26px;height:26px;background:#5a6a8e"></div>
<svg class="abs" style="left:667px;top:337px" width="26" height="26" viewBox="0 0 26 26"><path d="M4 20.5 C7 15 9.5 9.5 13 5.8 C15.2 3.6 18.6 4 19.8 6.4 L22.6 7.6 L20 8.8 C20.6 13 18.5 17 14.5 19 C11 20.6 7 20.2 4 20.5 Z" fill="#fff"/><circle cx="17.4" cy="7.4" r="0.8" fill="#5a6a8e"/><text x="12" y="23" font-family="Liberation Sans,sans-serif" font-size="5.5" font-weight="bold" fill="#fff">Y.S</text></svg>
<svg class="abs" style="left:669px;top:368px" width="22" height="21" viewBox="0 0 22 21"><rect x="0.5" y="1" width="5.5" height="5.5" fill="#c6c6c6"/><path d="M6 3.8 H19.5 M3.3 6.5 V19.5" stroke="#c6c6c6" stroke-width="1.5"/><path d="M9 9 L20.5 13.4 L15.6 15 L13.6 20 Z" fill="#c6c6c6"/></svg>
<div class="abs" style="left:668px;top:396px;width:24px;height:23px;background:#c9c9c9"></div>
<svg class="abs" style="left:668px;top:396px" width="24" height="23" viewBox="0 0 24 23"><path d="M3 21 L6.5 10.5 L15 3 L21.5 9 L14 17.5 Z" fill="#3a3a3a"/><path d="M5.4 18.4 L8.2 11.4 L11.8 13 L13.2 16 Z" fill="#c9c9c9"/><path d="M14 2.6 L16 1 L23 7.4 L21.4 9.6 Z" fill="#c9c9c9"/></svg>
<svg class="abs" style="left:669px;top:426px" width="22" height="20" viewBox="0 0 22 20"><rect x="1" y="1" width="20" height="18" rx="3.5" fill="none" stroke="#c6c6c6" stroke-width="1.3"/><path d="M1 7 H21 M1 13 H21 M7.5 1 V19" stroke="#c6c6c6" stroke-width="1.1" fill="none"/><path d="M12 1 C19 4.5 19 15.5 12 19 M12.5 7 C14.5 8.5 14.5 11.5 12.5 13" stroke="#c6c6c6" stroke-width="1.1" fill="none"/></svg>
<svg class="abs" style="left:668px;top:452px" width="24" height="23" viewBox="0 0 24 23"><g fill="#c6c6c6"><circle cx="2" cy="2" r="0.8"/><circle cx="2" cy="6.2" r="0.8"/><circle cx="2" cy="10.4" r="0.8"/><circle cx="5" cy="4" r="0.8"/><circle cx="5" cy="8.2" r="0.8"/><circle cx="8" cy="6.2" r="0.9"/><rect x="12.4" y="3.4" width="3" height="6"/><rect x="10.4" y="5" width="2.4" height="1.8"/></g><path d="M7.5 21.5 V14.5 Q7.5 9.8 12 9.8 H17.6 Q22 9.8 22 14.5 V21.5 Z" fill="#c6c6c6"/><rect x="9.4" y="15.6" width="10.8" height="3.6" fill="#3c3c3c"/></svg>
<svg class="abs" style="left:669px;top:482px" width="22" height="22" viewBox="0 0 22 22"><path d="M13 2 L16.5 0.8 L21 5.6 L19.6 8.6 L10.5 20 Q9 21.4 7.4 20 L2 14.8 Q0.8 13.4 2.2 12 Z" fill="#c6c6c6"/><path d="M5.6 12.4 L9.4 8.6 L15.4 13.4 L11.6 17.4 Z" fill="#3c3c3c"/><path d="M12.6 3.8 L18.8 9.4" stroke="#3c3c3c" stroke-width="1.2"/></svg>
<svg class="abs" style="left:669px;top:510px" width="22" height="22" viewBox="0 0 22 22"><path d="M2 20.5 L3.6 15.6 L11.5 7 L14.6 10 L6.6 18.6 Z" fill="none" stroke="#c6c6c6" stroke-width="1.5" stroke-linejoin="round"/><path d="M10 6 L11.6 4.4 L17.2 10 L15.6 11.6 Z M13.6 5.4 L16.6 1.6 Q18 0.4 19.6 1.8 Q21 3.4 19.8 4.8 L16.2 8 Z" fill="#c6c6c6"/></svg>
<div class="abs" style="left:669px;top:538px;width:22px;height:2px;background:#e8e8e8"></div>
<!-- /TOOL ICONS -->
<!-- LAYER HEADER ICONS -->
<svg class="abs" style="left:722px;top:103px" width="17" height="17" viewBox="0 0 17 17"><rect x="0.9" y="4.9" width="11.2" height="11.2" rx="2.2" fill="#5c5c5c" stroke="#8c8c8c" stroke-width="1.1"/><rect x="3.8" y="4.5" width="8.2" height="7.8" rx="1.5" fill="#cdcdcd"/><rect x="4" y="0.8" width="12" height="11.8" rx="1.5" fill="none" stroke="#cdcdcd" stroke-width="1.1" stroke-dasharray="2.2 1.4"/></svg>
<svg class="abs" style="left:744px;top:103px" width="17" height="17" viewBox="0 0 17 17"><path d="M6.2 16 L7.2 7.4 H9.8 L10.8 16 Z M6.9 6.4 V4.2 L8.5 2.6 L10.1 4.2 V6.4 Z" fill="#cdcdcd"/><path d="M0.6 1.6 L6.4 4.2 M0.6 8 L6.4 5.6 M16.4 1.6 L10.6 4.2 M16.4 8 L10.6 5.6" stroke="#cdcdcd" stroke-width="1.1"/></svg>
<svg class="abs" style="left:766px;top:102px" width="18" height="18" viewBox="0 0 18 18"><path d="M1.8 1.2 H9.6 V8.2 L7.4 12.6 H4 L1.8 8.2 Z" fill="#cdcdcd"/><path d="M5.7 3.6 C6.4 5 7.6 5.6 7.4 7.2 C7.2 8.6 6.2 9 5.7 9.6 C5.2 9 4.2 8.6 4 7.2 C3.8 5.6 5 5 5.7 3.6 Z" fill="#4b4b4b"/><path d="M5.7 12.4 V15.6 H10.6 C11 12.8 14.4 12.2 16.4 14.2 M16.9 11 V14.8 H13.2" fill="none" stroke="#cdcdcd" stroke-width="1.3"/></svg>
<svg class="abs" style="left:793px;top:103px" width="9" height="16" viewBox="0 0 9 16"><path d="M2 7 V4.2 C2 0.4 7 0.4 7 4.2 V7" fill="none" stroke="#cdcdcd" stroke-width="1.3"/><rect x="0.5" y="7" width="8" height="8" rx="1" fill="#cdcdcd"/></svg>
<svg class="abs" style="left:808px;top:103px" width="14" height="16" viewBox="0 0 14 16"><g fill="#6e6e6e"><rect x="1" y="0" width="3" height="3"/><rect x="9" y="0" width="3" height="3"/><rect x="5" y="4" width="3" height="3"/><path d="M4 8 V6 C4 3.5 9 3.5 9 6 V8 H10 V14 H3 V8 Z"/></g></svg>
<div class="abs" style="left:830px;top:101px;width:41px;height:21px;background:#535353"></div>
<div class="abs" style="left:873px;top:101px;width:40px;height:21px;background:#535353"></div>
<svg class="abs" style="left:837px;top:103px" width="18" height="17" viewBox="0 0 18 17"><rect x="0.5" y="0.5" width="16" height="15" rx="3" fill="#6e6e6e"/><circle cx="8.5" cy="8" r="4.3" fill="#535353"/></svg>
<svg class="abs" style="left:859px;top:108px" width="11" height="7" viewBox="0 0 11 7"><path d="M1 1 L5.5 5.5 L10 1" fill="none" stroke="#8a8a8a" stroke-width="1.2"/></svg>
<svg class="abs" style="left:879px;top:103px" width="17" height="17" viewBox="0 0 17 17"><rect x="0.5" y="0.5" width="15" height="15" rx="2" fill="#6e6e6e"/><path d="M15 1 L1 15 H15 Z" fill="#5c5c5c"/></svg>
<svg class="abs" style="left:901px;top:108px" width="11" height="7" viewBox="0 0 11 7"><path d="M1 1 L5.5 5.5 L10 1" fill="none" stroke="#8a8a8a" stroke-width="1.2"/></svg>
<div class="abs" style="left:916px;top:100px;width:40px;height:22px;background:#5e5e5e;border:1px solid #7a7a7a;border-radius:2px;box-sizing:border-box"></div>
<div class="abs" style="left:925px;top:109px;width:11px;height:10px;background:#fff"></div>
<div class="abs" style="left:920px;top:105px;width:11px;height:10px;background:#4a87c9;box-shadow:0 0 0 0.5px #5e5e5e"></div>
<svg class="abs" style="left:942px;top:108px" width="11" height="7" viewBox="0 0 11 7"><path d="M1 1 L5.5 5.5 L10 1" fill="none" stroke="#d8d8d8" stroke-width="1.3"/></svg>
<svg class="abs" style="left:706px;top:129px" width="16" height="15" viewBox="0 0 16 15"><rect x="0.6" y="0.6" width="14.8" height="13.8" rx="2" fill="none" stroke="#cdcdcd" stroke-width="1.2"/><path d="M0.6 7.5 H15.4" stroke="#cdcdcd" stroke-width="1.1"/><path d="M3 3 H5.5 M3 5.2 H5.5 M3 9.8 H5.5 M3 12 H5.5" stroke="#cdcdcd" stroke-width="1"/></svg>
<svg class="abs" style="left:779px;top:128px" width="19" height="18" viewBox="0 0 19 18"><path d="M1 11.5 V2.4 Q1 1 2.4 1 H12.6 Q14 1 14 2.4 V9.5 M9.5 15 H4.6 L1 11.5" fill="none" stroke="#cdcdcd" stroke-width="1.2"/><path d="M1 11.5 H4.6 V15 Z" fill="#cdcdcd"/><circle cx="14.5" cy="13.5" r="3.6" fill="#4b4b4b" stroke="#cdcdcd" stroke-width="1.1"/><path d="M12.3 13.5 H16.7 M14.5 11.3 V15.7" stroke="#cdcdcd" stroke-width="1.2"/></svg>
<svg class="abs" style="left:802px;top:128px" width="19" height="18" viewBox="0 0 19 18"><path d="M1 11.5 V2.4 Q1 1 2.4 1 H12.6 Q14 1 14 2.4 V9.5 M9.5 15 H4.6 L1 11.5" fill="none" stroke="#cdcdcd" stroke-width="1.2"/><path d="M1 11.5 H4.6 V15 Z" fill="#cdcdcd"/><path d="M7.5 3.4 L11 5.2 V9 L7.5 10.8 L4 9 V5.2 Z M4 5.2 L7.5 7 L11 5.2 M7.5 7 V10.8" fill="none" stroke="#cdcdcd" stroke-width="0.9"/><circle cx="14.5" cy="13.5" r="3.6" fill="#4b4b4b" stroke="#cdcdcd" stroke-width="1.1"/><path d="M12.3 13.5 H16.7 M14.5 11.3 V15.7" stroke="#cdcdcd" stroke-width="1.2"/></svg>
<svg class="abs" style="left:823px;top:129px" width="19" height="16" viewBox="0 0 19 16"><path d="M0.5 15 V1.8 Q0.5 0.6 1.7 0.6 H6.4 L8.4 3 H16.8 Q18 3 18 4.2 V15 Z" fill="#cdcdcd"/><path d="M0.5 5.4 H18" stroke="#4b4b4b" stroke-width="0.9"/></svg>
<svg class="abs" style="left:845px;top:128px" width="19" height="18" viewBox="0 0 19 18"><rect x="6.5" y="0.6" width="11.5" height="10.5" rx="1.5" fill="none" stroke="#6e6e6e" stroke-width="1.1"/><rect x="0.6" y="6.5" width="11.5" height="10.5" rx="1.5" fill="#4b4b4b" stroke="#6e6e6e" stroke-width="1.1"/><rect x="10" y="4" width="4" height="4" fill="#6e6e6e"/></svg>
<svg class="abs" style="left:868px;top:128px" width="18" height="18" viewBox="0 0 18 18"><path d="M5 0.6 H15.8 Q17.2 0.6 17.2 2 V12" fill="none" stroke="#6e6e6e" stroke-width="1.1"/><rect x="0.6" y="5" width="12" height="12" rx="1.5" fill="none" stroke="#6e6e6e" stroke-width="1.1"/><path d="M10.5 7.5 L4 14 M4 9.5 V14 H8.5" fill="none" stroke="#6e6e6e" stroke-width="1.3"/></svg>
<svg class="abs" style="left:891px;top:128px" width="17" height="17" viewBox="0 0 17 17"><rect x="0.5" y="0.5" width="16" height="15.5" rx="2.5" fill="#cdcdcd"/><circle cx="8.6" cy="8.4" r="4.4" fill="#4b4b4b"/></svg>
<svg class="abs" style="left:913px;top:128px" width="19" height="18" viewBox="0 0 19 18"><rect x="0.6" y="1" width="12" height="11" rx="1.5" fill="none" stroke="#6e6e6e" stroke-width="1.1"/><rect x="7" y="6" width="11.5" height="11" rx="2" fill="#6e6e6e"/><circle cx="12.8" cy="11.6" r="3" fill="#4b4b4b"/><path d="M8.4 9 H3.2 M5 7 L3 9 L5 11" fill="none" stroke="#6e6e6e" stroke-width="1.2"/></svg>
<svg class="abs" style="left:938px;top:127px" width="13" height="18" viewBox="0 0 13 18"><path d="M1.8 5 H11.2 L10.4 16 Q10.3 17 9.3 17 H3.7 Q2.7 17 2.6 16 Z" fill="none" stroke="#cdcdcd" stroke-width="1.2"/><path d="M0.5 4.2 H12.5 M4.2 4 V2.2 Q4.2 1.2 5.2 1.2 H7.8 Q8.8 1.2 8.8 2.2 V4" fill="none" stroke="#cdcdcd" stroke-width="1.2"/><path d="M4.6 7 V14.6 M6.5 7 V14.6 M8.4 7 V14.6" stroke="#cdcdcd" stroke-width="1"/></svg>
<!-- /LAYER HEADER ICONS -->
<!-- LAYER ROWS -->
<div class="abs" style="left:725px;top:150px;width:2px;height:331px;background:#232323"></div>
<div class="abs" style="left:746px;top:150px;width:2px;height:331px;background:#232323"></div>
<div class="abs" style="left:748px;top:151px;width:194px;height:31px;background:#5a6a8e"></div>
<div class="abs" style="left:708px;top:160px;width:10px;height:11px;border:1px solid #222;border-radius:2px;background:#393939"></div>
<svg class="abs" style="left:728px;top:157px" width="17" height="18" viewBox="0 0 17 18"><path d="M3 13 L4 9.6 L11.6 2 L14 4.4 L6.4 12 Z" fill="#d0d0d0"/><path d="M1 16.5 H16" stroke="#d0d0d0" stroke-width="1.4"/></svg>
<svg class="abs" style="left:750px;top:164px" width="11" height="8" viewBox="0 0 11 8"><path d="M1 1.5 L5.5 6.5 L10 1.5" fill="none" stroke="#d8d8d8" stroke-width="1.4"/></svg>
<svg class="abs" style="left:767px;top:158px" width="21" height="16" viewBox="0 0 20 15"><path d="M1 14 V2.2 Q1 1 2.2 1 H7 L9 3.2 H15.8 Q17 3.2 17 4.4 V6 H5.6 L2.2 13.6 Z M6.3 7 H19.6 L16.6 14 H3.2 Z" fill="#c9c9c9" fill-rule="evenodd"/></svg>
<div class="t1" style="left:798px;top:154px"><span class="n">100</span><span class="pc">%</span>通過</div><div class="t2" style="left:798px;top:167px">hair effects</div>
<div class="abs" style="left:764px;top:182px;width:178px;height:2px;background:#222"></div>
<div class="abs" style="left:764px;top:215px;width:178px;height:2px;background:#222"></div>
<div class="abs" style="left:703px;top:248px;width:239px;height:2px;background:#222"></div>
<div class="abs" style="left:764px;top:281px;width:178px;height:2px;background:#222"></div>
<div class="abs" style="left:764px;top:314px;width:178px;height:2px;background:#222"></div>
<div class="abs" style="left:764px;top:347px;width:178px;height:2px;background:#222"></div>
<div class="abs" style="left:764px;top:380px;width:178px;height:2px;background:#222"></div>
<div class="abs" style="left:703px;top:413px;width:239px;height:2px;background:#222"></div>
<div class="abs" style="left:703px;top:447px;width:239px;height:2px;background:#222"></div>
<div class="abs" style="left:703px;top:480px;width:239px;height:2px;background:#222"></div>
<div class="abs" style="left:703px;top:182px;width:44px;height:1px;background:#2b2b2b"></div>
<div class="abs" style="left:703px;top:215px;width:44px;height:1px;background:#2b2b2b"></div>
<div class="abs" style="left:703px;top:248px;width:44px;height:1px;background:#2b2b2b"></div>
<div class="abs" style="left:703px;top:281px;width:44px;height:1px;background:#2b2b2b"></div>
<div class="abs" style="left:703px;top:314px;width:44px;height:1px;background:#2b2b2b"></div>
<div class="abs" style="left:703px;top:347px;width:44px;height:1px;background:#2b2b2b"></div>
<div class="abs" style="left:703px;top:380px;width:44px;height:1px;background:#2b2b2b"></div>
<div class="abs" style="left:703px;top:413px;width:44px;height:1px;background:#2b2b2b"></div>
<div class="abs" style="left:703px;top:447px;width:44px;height:1px;background:#2b2b2b"></div>
<div class="abs" style="left:703px;top:480px;width:44px;height:1px;background:#2b2b2b"></div>
<svg class="abs" style="left:705px;top:192px" width="18" height="14" viewBox="0 0 18 14"><path d="M1 8.5 C3.5 1.8 14.5 1.8 17 8.5" fill="none" stroke="#5c5c5c" stroke-width="1.5"/><circle cx="9" cy="8.2" r="3.3" fill="#5c5c5c"/></svg>
<div class="abs" style="left:730px;top:193px;width:10px;height:11px;border:1px solid #222;border-radius:2px;background:#393939"></div>
<svg class="abs" style="left:773px;top:187px" width="20" height="25" viewBox="0 0 20 25"><defs><filter id="tb" x="-20%" y="-20%" width="140%" height="140%"><feGaussianBlur stdDeviation="1.1"/></filter><clipPath id="tc"><rect x="1" y="1" width="18" height="23"/></clipPath></defs><rect x="0.5" y="0.5" width="19" height="24" fill="#5a5a5a" stroke="#1c1c1c"/><g clip-path="url(#tc)" filter="url(#tb)"><rect x="6" y="2" width="5" height="5" fill="#e8e8e8"/><rect x="10" y="6" width="5" height="5" fill="#d0d0d0"/><rect x="5" y="7" width="5" height="5" fill="#f4f4f4"/><rect x="9" y="11" width="5" height="5" fill="#e0e0e0"/><rect x="5" y="13" width="4" height="5" fill="#bcbcbc"/><rect x="9" y="17" width="5" height="4" fill="#b0b0b0"/><rect x="4" y="18" width="5" height="4" fill="#909090"/></g></svg>
<div class="t1" style="left:802px;top:186px"><span class="n">100</span><span class="pc">%</span><span class="k">オーバーレイ</span></div><div class="t2" style="left:802px;top:200px"><span class="k">レイヤー</span> 2</div>
<svg class="abs" style="left:705px;top:225px" width="18" height="14" viewBox="0 0 18 14"><path d="M1 8.5 C3.5 1.8 14.5 1.8 17 8.5" fill="none" stroke="#5c5c5c" stroke-width="1.5"/><circle cx="9" cy="8.2" r="3.3" fill="#5c5c5c"/></svg>
<div class="abs" style="left:730px;top:226px;width:10px;height:11px;border:1px solid #222;border-radius:2px;background:#393939"></div>
<div class="abs" style="left:773px;top:220px;width:18px;height:23px;border:1px solid #1c1c1c;background:#6c6c6c"></div>
<svg class="abs" style="left:808px;top:221px" width="19" height="19" viewBox="0 0 19 19"><rect width="19" height="19" fill="#f4f4f4"/><g stroke="#444" stroke-width="1.3"><path d="M2 4 H17 M2 9.5 H17 M2 15 H17"/></g><g fill="#222"><path d="M7.5 2 L11.5 2 L9.5 5.5 Z M7.5 12 L11.5 12 L9.5 8 Z M7.5 13 L11.5 13 L9.5 17 Z"/></g></svg>
<div class="t1" style="left:830px;top:220px"><span class="n">100</span><span class="pc">%</span>通常</div><div class="t2" style="left:830px;top:233px">色相<span class="dot">・</span>彩度<span class="dot">・</span>明度 1</div>
<svg class="abs" style="left:705px;top:258px" width="18" height="14" viewBox="0 0 18 14"><path d="M1 8.5 C3.5 1.8 14.5 1.8 17 8.5" fill="none" stroke="#c6c6c6" stroke-width="1.5"/><circle cx="9" cy="8.2" r="3.3" fill="#c6c6c6"/></svg>
<div class="abs" style="left:730px;top:260px;width:10px;height:11px;border:1px solid #222;border-radius:2px;background:#393939"></div>
<svg class="abs" style="left:750px;top:263px" width="11" height="8" viewBox="0 0 11 8"><path d="M1 1.5 L5.5 6.5 L10 1.5" fill="none" stroke="#c8c8c8" stroke-width="1.4"/></svg>
<svg class="abs" style="left:768px;top:258px" width="21" height="16" viewBox="0 0 20 15"><path d="M1 14 V2.2 Q1 1 2.2 1 H7 L9 3.2 H15.8 Q17 3.2 17 4.4 V6 H5.6 L2.2 13.6 Z M6.3 7 H19.6 L16.6 14 H3.2 Z" fill="#c9c9c9" fill-rule="evenodd"/></svg>
<div class="t1" style="left:798px;top:253px"><span class="n">100</span><span class="pc">%</span>通常</div><div class="t2" style="left:798px;top:266px">character</div>
<div class="abs" style="left:703px;top:282px;width:22px;height:32px;background:#f85c5c"></div><div class="abs" style="left:727px;top:282px;width:19px;height:32px;background:#f85c5c"></div>
<svg class="abs" style="left:705px;top:291px" width="18" height="14" viewBox="0 0 18 14"><path d="M1 8.5 C3.5 1.8 14.5 1.8 17 8.5" fill="none" stroke="#4d4a52" stroke-width="1.5"/><circle cx="9" cy="8.2" r="3.3" fill="#4d4a52"/></svg>
<div class="abs" style="left:730px;top:292px;width:10px;height:11px;border:1px solid #d93a3a;border-radius:2px;background:#f85c5c"></div>
<svg class="abs" style="left:771px;top:293px" width="8" height="12" viewBox="0 0 8 12"><path d="M1.5 1 L6.5 6 L1.5 11" fill="none" stroke="#c8c8c8" stroke-width="1.4"/></svg>
<svg class="abs" style="left:786px;top:291.5px" width="16.5" height="14.5" viewBox="0 0 16 13"><path d="M0.5 12.5 V1.6 Q0.5 0.5 1.6 0.5 H5.6 L7.4 2.6 H14.4 Q15.5 2.6 15.5 3.7 V12.5 Z" fill="#a9a9a9"/><path d="M0.5 4.4 H15.5" stroke="#333" stroke-width="0.8"/></svg>
<div class="t1" style="left:816px;top:286px"><span class="n">100</span><span class="pc">%</span>通過</div><div class="t2" style="left:816px;top:299px">make</div>
<svg class="abs" style="left:705px;top:324px" width="18" height="14" viewBox="0 0 18 14"><path d="M1 8.5 C3.5 1.8 14.5 1.8 17 8.5" fill="none" stroke="#c6c6c6" stroke-width="1.5"/><circle cx="9" cy="8.2" r="3.3" fill="#c6c6c6"/></svg>
<div class="abs" style="left:730px;top:325px;width:10px;height:11px;border:1px solid #222;border-radius:2px;background:#393939"></div>
<div class="abs" style="left:773px;top:319px;width:18px;height:23px;border:1px solid #1c1c1c;background-color:#fff;background-image:linear-gradient(45deg,#ccc 25%,transparent 25%,transparent 75%,#ccc 75%),linear-gradient(45deg,#ccc 25%,transparent 25%,transparent 75%,#ccc 75%);background-size:8px 8px;background-position:0 0,4px 4px"></div>
<svg class="abs" style="left:808px;top:319px" width="19" height="19" viewBox="0 0 19 19"><rect x="0.5" y="0.5" width="18" height="18" rx="3" fill="#f2f2f2" stroke="#fff"/><rect x="2.5" y="2.5" width="14" height="14" rx="2" fill="none" stroke="#555" stroke-width="1"/><path d="M9.5 4.5 L14 7 V12 L9.5 14.5 L5 12 V7 Z M5 7 L9.5 9.5 L14 7 M9.5 9.5 V14.5" fill="none" stroke="#444" stroke-width="1"/></svg>
<div class="t1" style="left:830px;top:319px"><span class="n">100</span><span class="pc">%</span>通常</div><div class="t2" style="left:830px;top:332px">Line</div>
<div class="abs" style="left:703px;top:348px;width:22px;height:32px;background:#f85c5c"></div><div class="abs" style="left:727px;top:348px;width:19px;height:32px;background:#f85c5c"></div>
<svg class="abs" style="left:705px;top:357px" width="18" height="14" viewBox="0 0 18 14"><path d="M1 8.5 C3.5 1.8 14.5 1.8 17 8.5" fill="none" stroke="#4d4a52" stroke-width="1.5"/><circle cx="9" cy="8.2" r="3.3" fill="#4d4a52"/></svg>
<div class="abs" style="left:730px;top:358px;width:10px;height:11px;border:1px solid #d93a3a;border-radius:2px;background:#f85c5c"></div>
<svg class="abs" style="left:771px;top:359px" width="8" height="12" viewBox="0 0 8 12"><path d="M1.5 1 L6.5 6 L1.5 11" fill="none" stroke="#c8c8c8" stroke-width="1.4"/></svg>
<svg class="abs" style="left:786px;top:357.5px" width="16.5" height="14.5" viewBox="0 0 16 13"><path d="M0.5 12.5 V1.6 Q0.5 0.5 1.6 0.5 H5.6 L7.4 2.6 H14.4 Q15.5 2.6 15.5 3.7 V12.5 Z" fill="#a9a9a9"/><path d="M0.5 4.4 H15.5" stroke="#333" stroke-width="0.8"/></svg>
<div class="t1" style="left:816px;top:352px"><span class="n">100</span><span class="pc">%</span>通過</div><div class="t2" style="left:816px;top:365px">color</div>
<svg class="abs" style="left:705px;top:390px" width="18" height="14" viewBox="0 0 18 14"><path d="M1 8.5 C3.5 1.8 14.5 1.8 17 8.5" fill="none" stroke="#c6c6c6" stroke-width="1.5"/><circle cx="9" cy="8.2" r="3.3" fill="#c6c6c6"/></svg>
<div class="abs" style="left:730px;top:391px;width:10px;height:11px;border:1px solid #222;border-radius:2px;background:#393939"></div>
<div class="abs" style="left:773px;top:385px;width:18px;height:23px;border:1px solid #1c1c1c;background-color:#fff;background-image:linear-gradient(45deg,#ccc 25%,transparent 25%,transparent 75%,#ccc 75%),linear-gradient(45deg,#ccc 25%,transparent 25%,transparent 75%,#ccc 75%);background-size:8px 8px;background-position:0 0,4px 4px"><div style="position:absolute;left:4px;top:5px;width:10px;height:11px;border-radius:5px 5px 4px 4px;background:#f0b074"></div><div style="position:absolute;left:6px;top:10px;width:6px;height:6px;border-radius:3px;background:#fdeee6"></div><div style="position:absolute;left:3px;top:16px;width:12px;height:4px;border-radius:3px 3px 0 0;background:#f8bfd0"></div></div>
<div class="t1" style="left:802px;top:385px"><span class="n">100</span><span class="pc">%</span>通常</div><div class="t2" style="left:802px;top:398px">base</div>
<svg class="abs" style="left:705px;top:423px" width="18" height="14" viewBox="0 0 18 14"><path d="M1 8.5 C3.5 1.8 14.5 1.8 17 8.5" fill="none" stroke="#c6c6c6" stroke-width="1.5"/><circle cx="9" cy="8.2" r="3.3" fill="#c6c6c6"/></svg>
<div class="abs" style="left:730px;top:425px;width:10px;height:11px;border:1px solid #222;border-radius:2px;background:#393939"></div>
<div class="abs" style="left:756px;top:419px;width:17px;height:23px;border:1px solid #1c1c1c;background:#dfd3f5"></div>
<svg class="abs" style="left:789px;top:418px" width="20" height="20" viewBox="0 0 20 20"><rect width="20" height="20" rx="2" fill="#f4f4f4"/><circle cx="10" cy="6.5" r="4.5" fill="#e07070"/><circle cx="8.5" cy="5.5" r="0.8" fill="#fff"/><circle cx="11.5" cy="5.5" r="0.8" fill="#fff"/><circle cx="10" cy="8" r="0.8" fill="#fff"/><rect x="2" y="8" width="5" height="9" rx="1.5" fill="#9aa0aa"/><circle cx="5.5" cy="15" r="2.5" fill="#5577bb"/><rect x="11.5" y="11.5" width="6" height="6" fill="#fff" stroke="#664433" stroke-width="1.6"/></svg>
<div class="t1" style="left:812px;top:418px"><span class="n">100</span><span class="pc">%</span>通常</div><div class="t2" style="left:812px;top:431px">background</div>
<svg class="abs" style="left:705px;top:457px" width="18" height="14" viewBox="0 0 18 14"><path d="M1 8.5 C3.5 1.8 14.5 1.8 17 8.5" fill="none" stroke="#c6c6c6" stroke-width="1.5"/><circle cx="9" cy="8.2" r="3.3" fill="#c6c6c6"/></svg>
<div class="abs" style="left:730px;top:458px;width:10px;height:11px;border:1px solid #222;border-radius:2px;background:#393939"></div>
<div class="abs" style="left:756px;top:453px;width:17px;height:23px;border:1px solid #1c1c1c;background:#fff"></div>
<svg class="abs" style="left:789px;top:452px" width="20" height="20" viewBox="0 0 20 20"><rect width="20" height="20" rx="1" fill="#f6f6f6"/><path d="M15 3.5 Q15 2.5 14 2.5 H5.5 Q4.5 2.5 4.5 3.5 V13 L8 16.5 H14 Q15 16.5 15 15.5 Z" fill="#fff" stroke="#333" stroke-width="1.3"/><path d="M4.5 13 H8 V16.5 Z" fill="#333" stroke="#333" stroke-width="0.8"/></svg>
<div class="t1" style="left:812px;top:463px;font-size:13.5px">用紙</div>
<div class="abs" style="left:703px;top:481px;width:239px;height:1.5px;background:#222"></div>
<!-- /LAYER ROWS -->
<!-- ANNOTATION -->
<div class="abs" id="through" style="left:784.5px;top:105px;font-size:27px;line-height:32px;font-weight:bold;color:#fcb608;-webkit-text-stroke:0.7px #fcb608;letter-spacing:2.2px;white-space:nowrap">Through</div>
<div class="abs" style="left:817px;top:140px;width:52px;height:41px;border:5px solid #f7941d;border-radius:13px;box-sizing:border-box"></div>
<!-- /ANNOTATION -->

</body>
</html>
